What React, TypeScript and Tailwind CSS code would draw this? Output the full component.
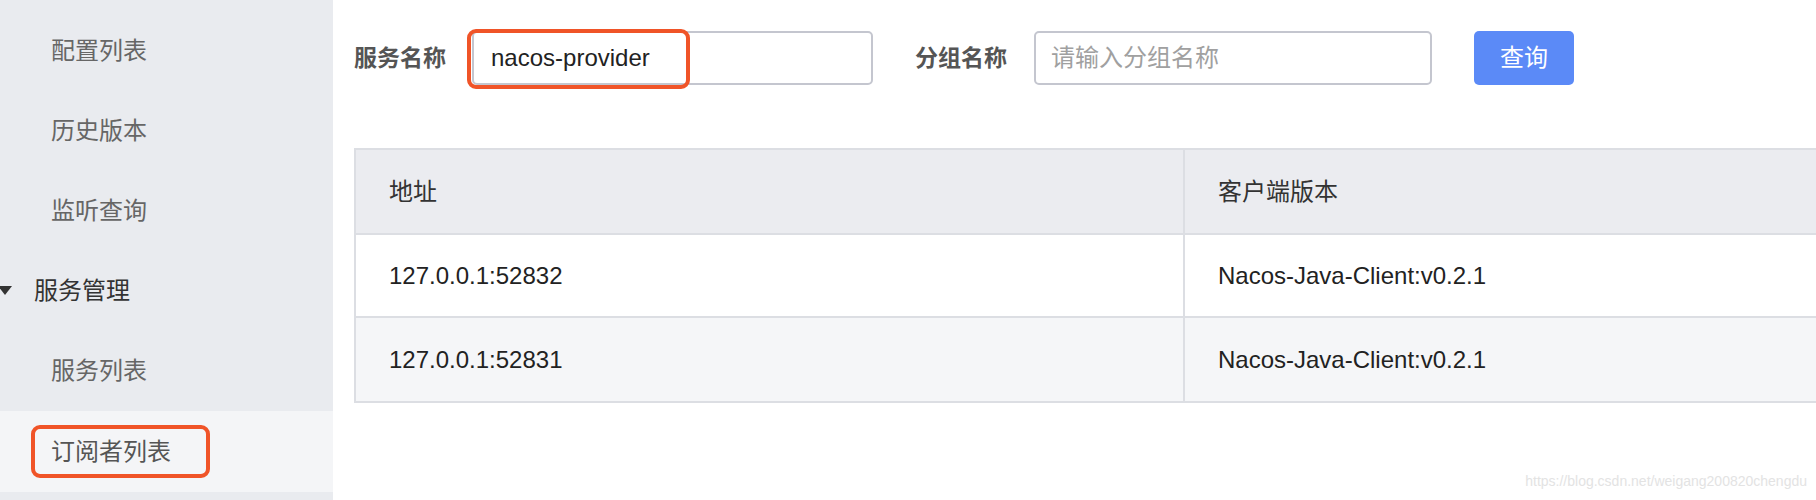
import React from 'react'

const font = { fontFamily: '"Liberation Sans", "Noto Sans CJK SC", sans-serif' }

const menu = ['配置列表', '历史版本', '监听查询']

const rows = [
  { addr: '127.0.0.1:52832', ver: 'Nacos-Java-Client:v0.2.1', bg: 'bg-white' },
  { addr: '127.0.0.1:52831', ver: 'Nacos-Java-Client:v0.2.1', bg: 'bg-[#f5f6f8]' },
]

export default function App() {
  return (
    <div className="w-[1816px] h-[500px] flex bg-white overflow-hidden relative" style={font}>
      {/* sidebar */}
      <aside className="w-[333px] h-full bg-[#e9ebef] pt-[11px] flex flex-col shrink-0">
        {menu.map((m) => (
          <div key={m} className="h-20 flex items-center pl-[51px] text-[24px] text-[#666]">
            {m}
          </div>
        ))}
        <div className="h-20 flex items-center text-[24px] text-[#333]">
          <svg width="14" height="10" viewBox="0 0 14 10" className="ml-[-2px] mr-[22px]">
            <path d="M0 0 L14 0 L7 9 Z" fill="#333" />
          </svg>
          服务管理
        </div>
        <div className="h-20 flex items-center pl-[51px] text-[24px] text-[#666]">服务列表</div>
        <div className="h-[81px] flex items-center bg-[#f4f5f7]">
          <span className="ml-[31px] h-[53px] inline-flex items-center pl-4 pr-[35px] border-[4px] border-[#f05428] rounded-[9px] text-[24px] text-[#555]">
            订阅者列表
          </span>
        </div>
      </aside>

      {/* main */}
      <main className="flex-1 pl-[21px] overflow-hidden">
        <div className="mt-[31px] h-[54px] flex items-center">
          <span className="text-[23px] font-bold text-[#555] w-[118px]">服务名称</span>
          <div className="relative w-[401px] h-[54px]">
            <div className="w-full h-full border-2 border-[#c4c6cf] rounded-[5px] flex items-center pl-[17px] text-[24px] text-[#222]">
              nacos-provider
            </div>
            <div className="absolute left-[-5px] top-[-2px] w-[223px] h-[60px] border-[4px] border-[#f05428] rounded-[9px]" />
          </div>
          <span className="ml-[42px] text-[23px] font-bold text-[#555] w-[119px]">分组名称</span>
          <div className="w-[398px] h-[54px] border-2 border-[#c4c6cf] rounded-[5px] flex items-center pl-[15px] text-[24px] text-[#a0a0a0]">
            请输入分组名称
          </div>
          <button className="ml-[42px] w-[100px] h-[54px] rounded-[5px] bg-[#5b8af7] text-white text-[24px]">
            查询
          </button>
        </div>

        <div className="mt-[63px] w-[1600px] border-2 border-[#dcdee3] text-[24px]">
          <div className="flex h-[85px] bg-[#ebecf0] text-[#333] border-b-2 border-[#dcdee3]">
            <div className="w-[829px] flex items-center pl-[33px] border-r-2 border-[#dcdee3]">地址</div>
            <div className="flex-1 flex items-center pl-[33px]">客户端版本</div>
          </div>
          {rows.map((r, i) => (
            <div
              key={r.addr}
              className={`flex h-[83px] text-[#222] ${r.bg} ${i === 0 ? 'border-b-2 border-[#dcdee3]' : ''}`}
            >
              <div className="w-[829px] flex items-center pl-[33px] border-r-2 border-[#dcdee3]">{r.addr}</div>
              <div className="flex-1 flex items-center pl-[33px]">{r.ver}</div>
            </div>
          ))}
        </div>
      </main>

      {/* watermark */}
      <span className="absolute right-[9px] bottom-[8px] text-[14px] text-[#e3e3e3]">
        https://blog.csdn.net/weigang200820chengdu
      </span>
    </div>
  )
}
